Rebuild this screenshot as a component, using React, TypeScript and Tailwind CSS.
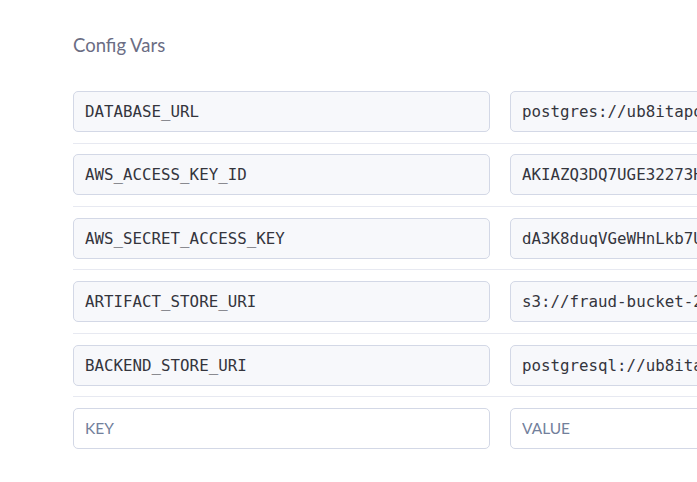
import React from 'react';

const configVars = [
  { key: 'DATABASE_URL', value: 'postgres://ub8itapo1k2m3dfe:p9f1c0a7d4b2e@ec2-54-161-208-31.compute-1.amazonaws.com:5432/d3q4r9' },
  { key: 'AWS_ACCESS_KEY_ID', value: 'AKIAZQ3DQ7UGE32273HQ' },
  { key: 'AWS_SECRET_ACCESS_KEY', value: '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' },
  { key: 'ARTIFACT_STORE_URI', value: 's3://fraud-bucket-2023/mlflow-artifacts' },
  { key: 'BACKEND_STORE_URI', value: 'postgresql://ub8itapo1k2m3dfe:p9f1c0a7d4b2e@ec2-54-161-208-31.compute-1.amazonaws.com:5432/d3q4r9' },
];

const filledInput =
  "h-[41px] w-[417px] shrink-0 rounded-[5px] border border-[#d3d8e6] bg-[#f7f8fb] px-[11px] [font-family:'DejaVu_Sans_Mono',monospace] text-[15.8px] text-[#34353d] outline-none";

const emptyInput =
  "h-[41px] w-[417px] shrink-0 rounded-[5px] border border-[#d3d8e6] bg-white px-[11px] [font-family:Lato,sans-serif] text-[15.5px] text-[#34353d] outline-none placeholder:text-[#72809b]";

export default function App() {
  return (
    <div className="h-[482px] w-[697px] overflow-hidden bg-white">
      <div className="w-[1100px] pl-[73px] pt-[33px]">
        <h3 className="[font-family:Lato,sans-serif] text-[18.5px] leading-6 text-[#6b6d84]">
          Config Vars
        </h3>

        <div className="mt-[34px]">
          {configVars.map((item) => (
            <div
              key={item.key}
              className="flex gap-[20px] border-b border-[#e7e9f1] pt-[10.7px] pb-[10.7px] first:pt-0"
            >
              <input className={filledInput} value={item.key} readOnly />
              <input className={filledInput} value={item.value} readOnly />
            </div>
          ))}

          <div className="flex gap-[20px] pt-[10.7px]">
            <input className={emptyInput} placeholder="KEY" />
            <input className={emptyInput} placeholder="VALUE" />
          </div>
        </div>
      </div>
    </div>
  );
}
